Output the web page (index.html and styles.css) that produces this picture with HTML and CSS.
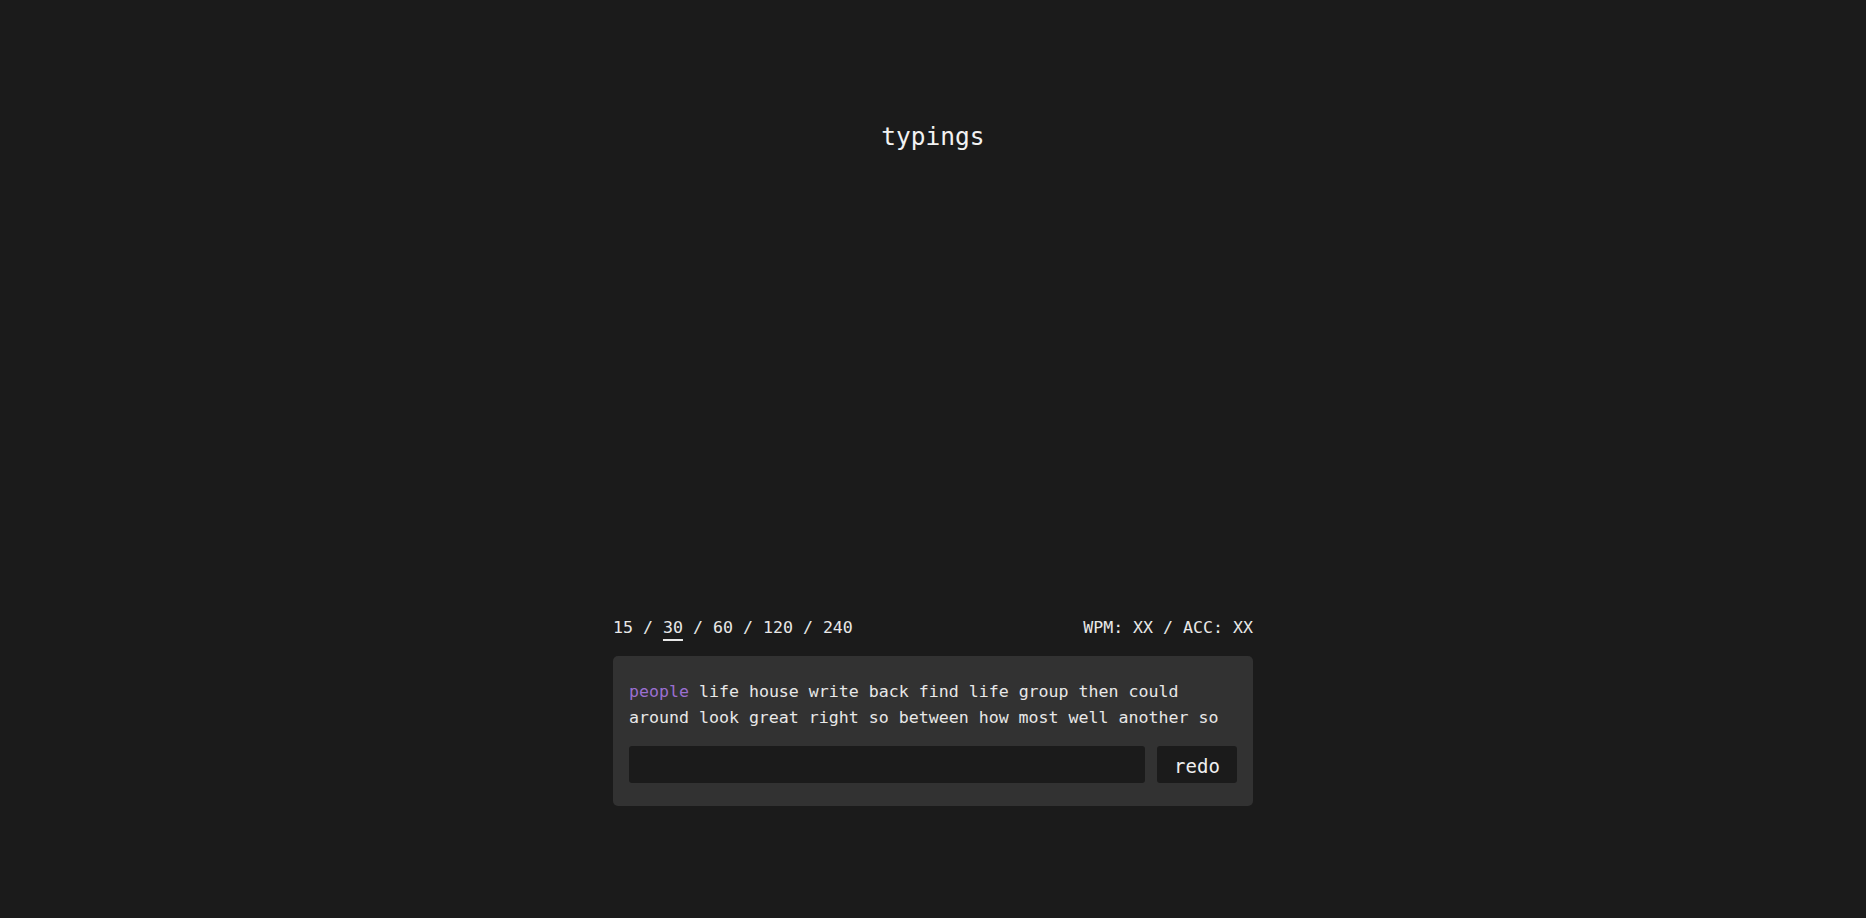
FILE: index.html
```html
<!DOCTYPE html>
<html lang="en">
<head>
<meta charset="utf-8">
<title>typings</title>
<link rel="stylesheet" href="styles.css">
</head>
<body>
<header class="header">
  <h1 class="title">typings</h1>
</header>
<main class="main">
  <div class="toolbar">
    <div class="lengths">
      <span class="opt">15</span> / <span class="opt opt-active">30</span> / <span class="opt">60</span> / <span class="opt">120</span> / <span class="opt">240</span>
    </div>
    <div class="stats">WPM: XX / ACC: XX</div>
  </div>
  <section class="card">
    <p class="words"><span class="current">people</span> life house write back find life group then could around look great right so between how most well another so</p>
    <div class="controls">
      <input class="typing-input" type="text" aria-label="type here">
      <button class="redo" type="button">redo</button>
    </div>
  </section>
</main>
</body>
</html>
```

FILE: styles.css
```css
html, body {
  margin: 0;
  padding: 0;
}

body {
  background: #1b1b1b;
  color: #e8e8e8;
  font-family: "DejaVu Sans Mono", "Liberation Mono", monospace;
  min-height: 100vh;
}

.header {
  padding-top: 121px;
  display: flex;
  justify-content: center;
}

.title {
  margin: 0;
  font-size: 24.5px;
  line-height: 32px;
  font-weight: normal;
  color: #f2f2f2;
}

.main {
  width: 640px;
  margin: 463px auto 0;
}

.toolbar {
  display: flex;
  justify-content: space-between;
  align-items: center;
  font-size: 16.6px;
  line-height: 20px;
  height: 20px;
  padding-top: 2px;
}

.opt-active {
  text-decoration: underline;
  text-decoration-thickness: 2px;
  text-underline-offset: 6px;
}

.card {
  margin-top: 18px;
  background: #323232;
  border-radius: 5px;
  padding: 23px 16px 23px;
}

.words {
  margin: 0;
  font-size: 16.6px;
  line-height: 26px;
  color: #e8e8e8;
}

.current {
  color: #9b6fd0;
}

.controls {
  margin-top: 15px;
  display: flex;
  gap: 12px;
}

.typing-input {
  flex: 1;
  height: 37px;
  box-sizing: border-box;
  background: #1b1b1b;
  border: none;
  border-radius: 3px;
  outline: none;
  color: #e8e8e8;
  font-family: inherit;
  font-size: 16px;
  padding: 0 10px;
}

.redo {
  width: 80px;
  height: 37px;
  background: #1b1b1b;
  border: none;
  border-radius: 3px;
  color: #f0f0f0;
  font-family: inherit;
  font-size: 19px;
  padding: 2px 0 0;
}
```
